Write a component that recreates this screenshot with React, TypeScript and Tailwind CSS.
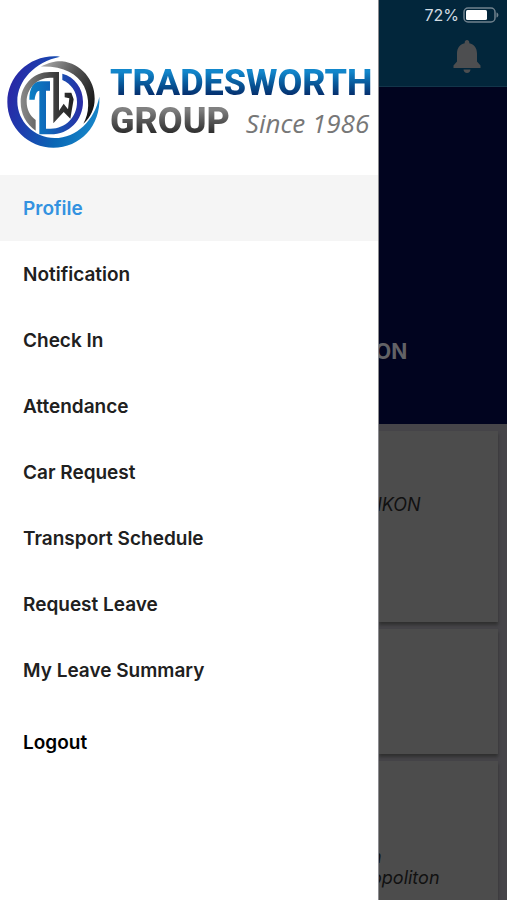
import { clsx } from 'clsx';

const menuItems = [
  'Profile',
  'Notification',
  'Check In',
  'Attendance',
  'Car Request',
  'Transport Schedule',
  'Request Leave',
  'My Leave Summary',
];

function LogoMark() {
  return (
    <svg viewBox="0 0 330 330" className="size-[110px] shrink-0" role="img" aria-label="Tradesworth Group logo">
      <defs>
        <linearGradient id="rim" x1="0" y1="0.3" x2="1" y2="0.6">
          <stop offset="0" stopColor="#2a25a5" />
          <stop offset="0.3" stopColor="#1d3fae" />
          <stop offset="0.65" stopColor="#0a67b5" />
          <stop offset="1" stopColor="#1785c8" />
        </linearGradient>
        <linearGradient id="shade" x1="0" y1="0" x2="1" y2="0.7">
          <stop offset="0" stopColor="#b0b0b0" />
          <stop offset="0.5" stopColor="#555555" />
          <stop offset="1" stopColor="#151515" />
        </linearGradient>
        <linearGradient id="steel" x1="0" y1="0" x2="1" y2="0">
          <stop offset="0" stopColor="#8a8a8a" />
          <stop offset="0.7" stopColor="#383838" />
          <stop offset="1" stopColor="#222222" />
        </linearGradient>
        <linearGradient id="ring" x1="0" y1="0" x2="1" y2="0">
          <stop offset="0" stopColor="#0b7fc4" />
          <stop offset="0.35" stopColor="#0f66b8" />
          <stop offset="1" stopColor="#2a2ba5" />
        </linearGradient>
      </defs>
      <path
        fill="url(#rim)"
        d="M180 32C94 22 22 88 22 168C22 246 86 305 160 305C240 305 303 240 298 152C284 222 230 276 164 276C102 276 52 226 52 166C52 104 104 48 180 32Z"
      />
      <path
        fill="url(#shade)"
        d="M122 62C148 49 166 45 186 46C242 52 285 101 284 158C284 188 272 213 250 233C268 203 270 158 252 121C232 82 188 60 122 62Z"
      />
      <path
        fill="url(#steel)"
        d="M107 254C78 234 62 204 62 168C62 118 100 78 150 78H177V194L191 173L204 190L208 157L194 154V140H214L221 160L211 218L191 198L160 232V95H150C110 96 80 128 80 167C80 190 90 209 107 222Z"
      />
      <path
        fill="url(#ring)"
        d="M187 83C224 93 249 126 249 167C249 222 207 265 152 265H118V134C110 135 106 145 104 161H88C88 128 99 106 124 106H150V134H138V248H152C197 248 231 213 231 168C231 138 213 113 187 102Z"
      />
    </svg>
  );
}

function Logo() {
  return (
    <div className="flex h-[175px] items-center pt-[27px]">
      <LogoMark />
      <div className="flex-1 pt-1 font-[Roboto,sans-serif] whitespace-nowrap">
        <p className="bg-linear-to-b from-[#1287cc] from-20% to-[#052a68] to-85% bg-clip-text text-[36px] leading-[38px] font-extrabold text-transparent">
          TRADESWORTH
        </p>
        <div className="flex items-baseline gap-4">
          <span className="bg-linear-to-b from-[#808080] from-20% to-[#2a2a2a] to-85% bg-clip-text text-[36px] leading-[38px] font-extrabold text-transparent">
            GROUP
          </span>
          <span className="font-['Open_Sans',sans-serif] text-[26px] leading-[38px] font-normal text-[#777777] italic">
            Since 1986
          </span>
        </div>
      </div>
    </div>
  );
}

function Drawer() {
  return (
    <aside className="w-[379px] shrink-0 border-r border-[#8c8c90] bg-white text-[19px] font-semibold">
      <Logo />
      <nav className="flex flex-col">
        {menuItems.map((item) => (
          <a
            key={item}
            href="#"
            aria-current={item === 'Profile' ? 'page' : undefined}
            className={clsx(
              'flex h-[66px] items-center px-[23px] pt-0.5',
              item === 'Profile' ? 'bg-[#f5f5f5] text-[#3392e0]' : 'text-[#202020]',
            )}
          >
            {item}
          </a>
        ))}
        <button type="button" className="mt-1 flex h-[70px] items-center px-[23px] pt-0.5 text-black">
          Logout
        </button>
      </nav>
    </aside>
  );
}

function StatusBar() {
  return (
    <div className="flex h-[29px] items-center justify-end gap-1 pr-2 text-[16px] text-[#d3dde3]">
      <span>72%</span>
      <svg viewBox="0 0 36 16" className="h-4 w-9" role="img" aria-label="Battery">
        <rect x="1" y="1" width="31" height="14" rx="4" fill="none" stroke="#71828e" strokeWidth="1.5" />
        <rect x="3" y="3" width="21" height="10" rx="1.5" fill="#ffffff" />
        <path d="M33.5 5.5C36 6 36 10 33.5 10.5Z" fill="#71828e" />
      </svg>
    </div>
  );
}

function Header() {
  return (
    <header className="h-[87px] border-b border-[#12354a] bg-[#02263b]">
      <StatusBar />
      <div className="flex justify-end pt-[9px] pr-[26px]">
        <button type="button" aria-label="Notifications">
          <svg viewBox="0 0 28 36" className="h-9 w-7" fill="#4d4e50">
            <path d="M14 2C12.6 2 11.7 3 11.7 4.3V5.2C6.8 6.3 4 10.2 4 15.5V23.5L0.5 27.5V30H27.5V27.5L24 23.5V15.5C24 10.2 21.2 6.3 16.3 5.2V4.3C16.3 3 15.4 2 14 2Z" />
            <path d="M10.5 31.5H17.5C17.3 33.5 16 35 14 35C12 35 10.7 33.5 10.5 31.5Z" />
          </svg>
        </button>
      </div>
    </header>
  );
}

const card = 'mr-[9px] bg-[#4c4c4c] shadow-[0_3px_3px_#303030]';

function Page() {
  return (
    <main className="flex min-w-0 flex-1 flex-col overflow-hidden bg-[#464549]">
      <Header />
      <section className="flex h-[337px] items-center bg-[#01041f] pt-[193px]">
        <h1 className="-ml-1 text-[21px] font-bold text-[#626266]">ON</h1>
      </section>
      <div className="flex flex-1 flex-col gap-[7px] pt-[7px] text-[18px] text-[#111111] italic">
        <section className={clsx(card, 'h-[191px] pt-[60px]')}>
          <p className="-ml-0.5">IKON</p>
        </section>
        <section className={clsx(card, 'h-[125px]')} />
        <section className={clsx(card, 'flex-1 pt-[85px] leading-[21px]')}>
          <p className="-ml-2">n</p>
          <p className="-ml-2">opoliton</p>
        </section>
      </div>
    </main>
  );
}

export default function App() {
  return (
    <div className="flex min-h-screen font-[Inter,sans-serif]">
      <Drawer />
      <Page />
    </div>
  );
}
